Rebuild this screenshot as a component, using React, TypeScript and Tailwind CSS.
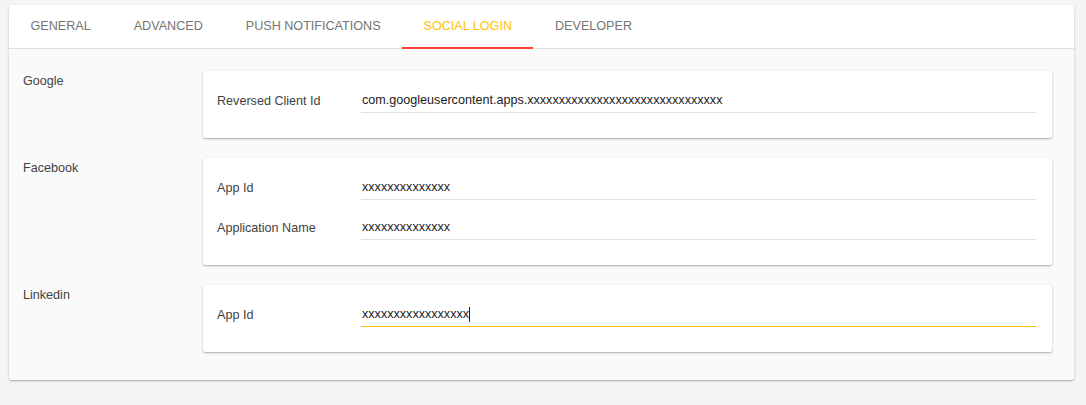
import React from "react";

const tabs = ["GENERAL", "ADVANCED", "PUSH NOTIFICATIONS", "SOCIAL LOGIN", "DEVELOPER"];

function Field({ label, value, focused }: { label: string; value: string; focused?: boolean }) {
  return (
    <div className="flex items-center h-[25px]">
      <div className="w-[144px] shrink-0 pt-[2px] text-[12.6px] text-[#424242]">{label}</div>
      <div
        className={
          "flex-1 h-[25px] flex items-center border-b text-[12.6px] text-[#212121] pl-[1px] " +
          (focused ? "border-[#ffc107]" : "border-[#e0e0e0]")
        }
      >
        <span>{value}</span>
        {focused && <span className="inline-block w-[1px] h-[15px] bg-[#212121]" />}
      </div>
    </div>
  );
}

function Section({ title, children }: { title: string; children: React.ReactNode }) {
  return (
    <div className="flex">
      <div className="w-[180px] shrink-0 pt-[1px] text-[12.6px] text-[#424242]">{title}</div>
      <div className="flex-1 bg-white rounded-[2px] shadow-[0_1px_3px_rgba(0,0,0,0.2),0_1px_1px_rgba(0,0,0,0.14)] pt-[17px] pb-[25px] pl-[14px] pr-[16px] flex flex-col gap-[15px]">
        {children}
      </div>
    </div>
  );
}

export default function App() {
  return (
    <div
      className="w-[1086px] h-[405px] bg-[#f5f5f5] pt-[5px] pl-[9px] overflow-hidden"
      style={{ fontFamily: '"Liberation Sans", Arial, sans-serif' }}
    >
      <div className="w-[1065px] bg-[#fafafa] rounded-[2px] shadow-[0_1px_3px_rgba(0,0,0,0.2),0_1px_1px_rgba(0,0,0,0.14)]">
        <div className="h-[44px] bg-white border-b border-[#e0e0e0] flex">
          {tabs.map((t) => {
            const active = t === "SOCIAL LOGIN";
            return (
              <div
                key={t}
                className={
                  "relative px-[21.5px] flex items-center text-[12.6px] " +
                  (active ? "text-[#ffc107]" : "text-[#757575]")
                }
              >
                {t}
                {active && <div className="absolute left-0 right-0 bottom-[-1px] h-[2px] bg-[#f44336]" />}
              </div>
            );
          })}
        </div>
        <div className="pl-[14px] pr-[22px] pt-[22px] pb-[28px] flex flex-col gap-[20px]">
          <Section title="Google">
            <Field label="Reversed Client Id" value={"com.googleusercontent.apps." + "x".repeat(31)} />
          </Section>
          <Section title="Facebook">
            <Field label="App Id" value={"x".repeat(14)} />
            <Field label="Application Name" value={"x".repeat(14)} />
          </Section>
          <Section title="Linkedin">
            <Field label="App Id" value={"x".repeat(17)} focused />
          </Section>
        </div>
      </div>
    </div>
  );
}
